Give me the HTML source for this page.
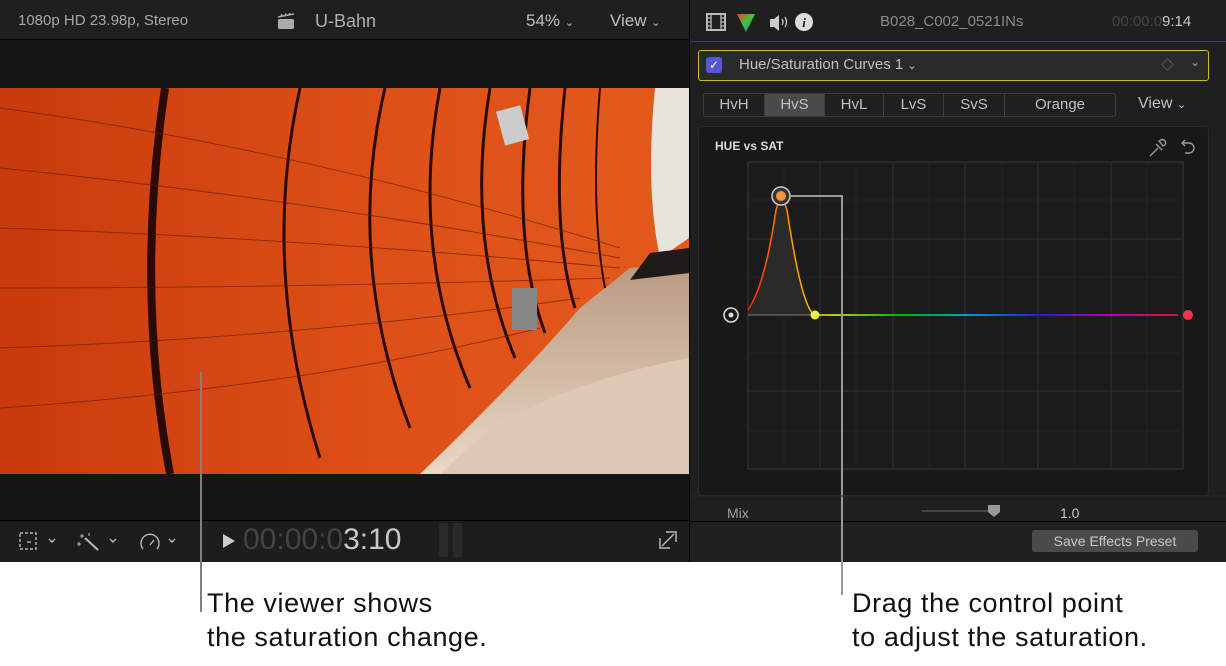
<!DOCTYPE html>
<html><head><meta charset="utf-8"><style>
*{margin:0;padding:0;box-sizing:border-box}
body{width:1226px;height:666px;background:#fff;position:relative;overflow:hidden;font-family:"Liberation Sans",sans-serif}
.a{position:absolute}
.t{color:#b5b5b5;white-space:nowrap}
</style></head><body>
<div class="a" style="left:0;top:0;width:689px;height:562px;background:#161616"></div>
<div class="a" style="left:0;top:0;width:689px;height:40px;background:#1f1f1f;border-bottom:1px solid #000"></div>
<div class="a t" style="left:18px;top:12px;font-size:15px;color:#a8a8a8">1080p HD 23.98p, Stereo</div>
<svg class="a" style="left:277px;top:13px" width="20" height="17"><rect x="1" y="6" width="16" height="10" rx="1.5" fill="#aaa"/><path d="M1 4 L17 1 M4 3.5 l1 -2.5 M8 3 l1 -2.5 M12 2 l1 -2.5" stroke="#aaa" stroke-width="1.6"/></svg>
<div class="a t" style="left:315px;top:11px;font-size:18px;color:#b0b0b0">U-Bahn</div>
<div class="a t" style="left:526px;top:11px;font-size:17px;color:#c0c0c0">54% <span style="font-size:11px">&#8964;</span></div>
<div class="a t" style="left:610px;top:11px;font-size:17px;color:#c0c0c0">View <span style="font-size:11px">&#8964;</span></div>
<svg class="a" style="left:0;top:88px" width="689" height="386" viewBox="0 0 689 386">
<defs><linearGradient id="fl" x1="0" y1="0" x2="0" y2="1"><stop offset="0" stop-color="#b89a80"/><stop offset="1" stop-color="#e8d8c6"/></linearGradient>
<linearGradient id="or" x1="0" y1="0" x2="1" y2="0"><stop offset="0" stop-color="#c93a0c"/><stop offset=".5" stop-color="#dc4e16"/><stop offset="1" stop-color="#e45a1c"/></linearGradient></defs>
<rect width="689" height="386" fill="url(#or)"/>
<path d="M630 180 L689 175 L689 386 L420 386 Q520 290 580 220 Z" fill="url(#fl)"/>
<path d="M440 386 L689 386 L689 270 Q580 290 490 340 Z" fill="#ddc9b4"/>
<path d="M655 0 L689 0 L689 150 L660 170 Q645 100 655 0Z" fill="#e8e4dc"/>
<path d="M650 165 L689 160 L689 185 L630 192Z" fill="#1e1a18"/>
<g stroke="#2a0a02" fill="none" stroke-width="3">
<path d="M165 0 Q135 200 170 386" stroke-width="8"/>
<path d="M300 0 Q260 180 320 370"/><path d="M385 0 Q345 170 410 340"/><path d="M440 0 Q410 160 470 300"/>
<path d="M490 0 Q465 150 515 270"/><path d="M530 0 Q510 150 545 245"/><path d="M565 0 Q550 140 575 220"/><path d="M600 0 Q590 120 605 200" stroke-width="2"/>
</g>
<g stroke="#5a1a06" stroke-width="1" fill="none" opacity=".6">
<path d="M0 20 Q300 60 620 160"/><path d="M0 80 Q300 110 620 170"/><path d="M0 140 Q300 150 620 180"/><path d="M0 200 Q300 200 610 190"/><path d="M0 260 Q300 250 580 210"/><path d="M0 320 Q300 300 540 240"/>
</g>
<rect x="500" y="20" width="25" height="35" fill="#ccc" transform="rotate(-15 512 37)"/>
<rect x="512" y="200" width="25" height="42" fill="#888"/>
</svg>
<div class="a" style="left:0;top:520px;width:689px;height:42px;background:#1d1d1d;border-top:1px solid #000"></div>
<svg class="a" style="left:18px;top:530px" width="170" height="24" fill="none" stroke="#b8b8b8" stroke-width="1.4">
<rect x="2" y="3" width="16" height="16" stroke-dasharray="3 2"/><path d="M9 12h4"/><path d="M31 9l3 3 3-3"/>
<path d="M67 8 L80 20" stroke-width="2"/><path d="M64 4v4M62 6h4M71 3v3M59 14h4M61 12v4" stroke-width="1"/><path d="M92 9l3 3 3-3"/>
<path d="M125 19 a9 9 0 1 1 14 0"/><path d="M132 15l4-5"/><path d="M151 9l3 3 3-3"/>
</svg>
<svg class="a" style="left:222px;top:533px" width="14" height="16"><path d="M1 1 L13 8 L1 15Z" fill="#ccc"/></svg>
<div class="a" style="left:243px;top:523px;font-size:30px;color:#444;white-space:nowrap;font-weight:300">00:00:0<span style="color:#c8c8c8">3:10</span></div>
<div class="a" style="left:439px;top:523px;width:9px;height:34px;background:#2a2a2a"></div>
<div class="a" style="left:453px;top:523px;width:9px;height:34px;background:#2a2a2a"></div>
<svg class="a" style="left:658px;top:530px" width="20" height="20" fill="none" stroke="#bbb" stroke-width="1.4"><path d="M2 8V18H12M8 2H18V12M4 16L16 4"/></svg>
<div class="a" style="left:689px;top:0;width:537px;height:562px;background:#1f1f1f;border-left:1px solid #000"></div>
<div class="a" style="left:690px;top:41px;width:536px;height:1px;background:#3c3a6a"></div>
<svg class="a" style="left:706px;top:12px" width="110" height="22">
<rect x="1" y="2" width="18" height="16" fill="none" stroke="#bbb" stroke-width="2"/><path d="M5 2v16M15 2v16M1 10h4M15 10h4M1 6h4M15 6h4M1 14h4M15 14h4" stroke="#bbb" stroke-width="1.3"/>
<defs><linearGradient id="pr" x1="0" y1="0" x2="1" y2="1"><stop offset="0" stop-color="#f33"/><stop offset=".5" stop-color="#3c3"/><stop offset="1" stop-color="#36f"/></linearGradient></defs>
<path d="M31 2 L49 2 L40 20Z" fill="url(#pr)"/>
<path d="M64 7h4l5-4v16l-5-4h-4z" fill="#ccc"/><path d="M76 7q2 3 0 6M79 5q3 5 0 10" stroke="#ccc" fill="none" stroke-width="1.3"/>
<circle cx="98" cy="10" r="9" fill="#ddd"/><text x="98" y="15" font-size="13" font-weight="bold" font-style="italic" text-anchor="middle" fill="#1f1f1f" font-family="Liberation Serif">i</text>
</svg>
<div class="a t" style="left:880px;top:13px;font-size:15px;color:#8a8a8a">B028_C002_0521INs</div>
<div class="a t" style="left:1112px;top:13px;font-size:15px;color:#444">00:00:0<span style="color:#c8c8c8">9:14</span></div>
<div class="a" style="left:698px;top:50px;width:511px;height:31px;border:1px solid #d8b824;border-radius:3px;background:#2a2a2a"></div>
<div class="a" style="left:706px;top:57px;width:16px;height:16px;background:#5856d6;border-radius:3px;color:#fff;font-size:12px;line-height:16px;text-align:center">&#10003;</div>
<div class="a t" style="left:739px;top:56px;font-size:15px;color:#c0c0c0">Hue/Saturation Curves 1 <span style="font-size:11px">&#8964;</span></div>
<div class="a" style="left:1163px;top:60px;width:9px;height:9px;border:1px solid #555;transform:rotate(45deg)"></div>
<div class="a t" style="left:1190px;top:55px;font-size:12px;color:#aaa">&#8964;</div>
<div class="a" style="left:703px;top:93px;width:413px;height:24px;border:1px solid #3e3e3e;border-radius:3px;background:#1f1f1f;display:flex;font-size:15px;color:#c0c0c0">
<div style="width:61px;text-align:center;line-height:22px;border-right:1px solid #3e3e3e">HvH</div>
<div style="width:60px;text-align:center;line-height:22px;border-right:1px solid #3e3e3e;background:#4a4a4a">HvS</div>
<div style="width:59px;text-align:center;line-height:22px;border-right:1px solid #3e3e3e">HvL</div>
<div style="width:60px;text-align:center;line-height:22px;border-right:1px solid #3e3e3e">LvS</div>
<div style="width:61px;text-align:center;line-height:22px;border-right:1px solid #3e3e3e">SvS</div>
<div style="flex:1;text-align:center;line-height:22px">Orange</div></div>
<div class="a t" style="left:1138px;top:95px;font-size:16px;color:#c0c0c0">View <span style="font-size:11px">&#8964;</span></div>
<div class="a" style="left:698px;top:126px;width:511px;height:370px;background:#181818;border:1px solid #2a2a2a;border-radius:4px"></div>
<div class="a t" style="left:715px;top:139px;font-size:12px;font-weight:bold;color:#ddd">HUE vs SAT</div>
<svg class="a" style="left:1148px;top:138px" width="50" height="20" fill="none" stroke="#999" stroke-width="1.4"><path d="M2 18 L10 10 M8 6 L14 12 M11 3 Q15 0 17 3 Q19 6 15 8Z"/><path d="M34 5 h7 a5 5 0 0 1 0 10 h-4 M37 2 l-3 3 3 3"/></svg>
<svg class="a" style="left:690px;top:150px" width="536" height="412">
<rect x="58" y="12" width="435" height="307" fill="#1b1b1b" stroke="#3a3a3a"/>
<g stroke="#232323"><path d="M94 12v307M166 12v307M239 12v307M312 12v307M384 12v307M457 12v307M58 50h435M58 127h435M58 203h435M58 281h435"/></g>
<g stroke="#303030"><path d="M130 12v307M203 12v307M275 12v307M348 12v307M421 12v307M58 89h435M58 241h435"/></g>
<defs><linearGradient id="hue" x1="58" x2="493" gradientUnits="userSpaceOnUse"><stop offset="0" stop-color="#f20"/><stop offset=".12" stop-color="#fa0"/><stop offset=".2" stop-color="#ff0"/><stop offset=".35" stop-color="#0d0"/><stop offset=".5" stop-color="#0cf"/><stop offset=".67" stop-color="#22f"/><stop offset=".83" stop-color="#d0d"/><stop offset="1" stop-color="#f24"/></linearGradient></defs>
<path d="M58 165 Q75 135 86 60 Q91 40 97 60 Q112 160 125 165Z" fill="#2a2a2a"/>
<path d="M58 165H125" stroke="#777"/>
<path d="M58 160 Q75 135 86 60 Q91 40 97 60 Q112 160 125 165 L488 165" fill="none" stroke="url(#hue)" stroke-width="1.6"/>
<path d="M101 46 H152 V440" fill="none" stroke="#999" stroke-width="2"/>
<circle cx="91" cy="46" r="9" fill="#333" stroke="#ccc" stroke-width="1.5"/><circle cx="91" cy="46" r="5" fill="#f7913b"/>
<circle cx="125" cy="165" r="4.5" fill="#ee4"/><circle cx="498" cy="165" r="5" fill="#f2354a"/>
<circle cx="41" cy="165" r="7" fill="none" stroke="#ddd" stroke-width="1.5"/><circle cx="41" cy="165" r="2.5" fill="#ddd"/>
<path d="M0 346H536" stroke="#2a2a2a"/>
<path d="M232 361H302" stroke="#444" stroke-width="2"/><path d="M298 355h12v7l-6 5-6-5z" fill="#999"/>
</svg>
<div class="a t" style="left:727px;top:505px;font-size:14px;color:#a0a0a0">Mix</div>
<div class="a t" style="left:1060px;top:505px;font-size:14px;color:#c8c8c8">1.0</div>
<div class="a" style="left:690px;top:521px;width:536px;height:41px;background:#1f1f1f;border-top:1px solid #000"></div>
<div class="a" style="left:1032px;top:530px;width:166px;height:22px;background:#4b4b4b;border-radius:3px;color:#c8c8c8;font-size:14px;line-height:22px;text-align:center">Save Effects Preset</div>
<svg class="a" style="left:840px;top:520px" width="6" height="75"><path d="M2 0V75" stroke="#999" stroke-width="2"/></svg>
<div class="a" style="left:200px;top:372px;width:2px;height:240px;background:#808080"></div>
<div class="a" style="left:207px;top:586px;font-size:27px;letter-spacing:0.6px;line-height:34px;color:#111;white-space:nowrap">The viewer shows<br>the saturation change.</div>
<div class="a" style="left:852px;top:586px;font-size:27px;letter-spacing:0.6px;line-height:34px;color:#111;white-space:nowrap">Drag the control point<br>to adjust the saturation.</div>
</body></html>
